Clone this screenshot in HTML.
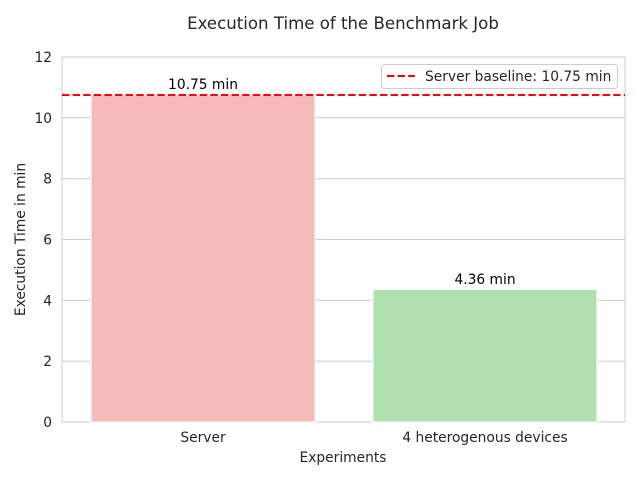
<!DOCTYPE html>
<html><head><style>html,body{margin:0;padding:0;background:#fff}</style></head><body>
<svg width="640" height="480" xmlns="http://www.w3.org/2000/svg" font-family="DejaVu Sans, sans-serif">
<rect width="640" height="480" fill="#fff"/>
<g stroke="#cccccc" stroke-width="1">
<line x1="62" x2="625" y1="422" y2="422"/>
<line x1="62" x2="625" y1="361.2" y2="361.2"/>
<line x1="62" x2="625" y1="300.3" y2="300.3"/>
<line x1="62" x2="625" y1="239.5" y2="239.5"/>
<line x1="62" x2="625" y1="178.7" y2="178.7"/>
<line x1="62" x2="625" y1="117.8" y2="117.8"/>
<line x1="62" x2="625" y1="57" y2="57"/>
<line x1="62" x2="62" y1="57" y2="422"/>
<line x1="625" x2="625" y1="57" y2="422"/>
</g>
<rect x="91" y="95" width="224" height="327" fill="#f5bbba" stroke="#fff" stroke-width="1"/>
<rect x="373" y="289.4" width="224" height="132.6" fill="#b0dfb0" stroke="#fff" stroke-width="1"/>
<line x1="62" x2="625" y1="95" y2="95" stroke="#ff0000" stroke-width="2" stroke-dasharray="7.4,3.2"/>
<g font-size="13.8" fill="#262626" text-anchor="end">
<text x="52" y="427">0</text><text x="52" y="366.2">2</text><text x="52" y="305.3">4</text>
<text x="52" y="244.5">6</text><text x="52" y="183.7">8</text><text x="52" y="122.8">10</text><text x="52" y="62">12</text>
</g>
<g font-size="13.8" fill="#262626" text-anchor="middle">
<text x="203" y="442">Server</text>
<text x="485" y="442">4 heterogenous devices</text>
<text x="343" y="462">Experiments</text>
<text x="203" y="89" fill="#000">10.75 min</text>
<text x="485" y="284" fill="#000">4.36 min</text>
<text x="343" y="29" font-size="16.6">Execution Time of the Benchmark Job</text>
<text transform="translate(25,239.5) rotate(-90)">Execution Time in min</text>
</g>
<rect x="381.5" y="64.5" width="236" height="24" rx="3" fill="#fff" fill-opacity="0.8" stroke="#cccccc"/>
<line x1="387" x2="415" y1="76" y2="76" stroke="#ff0000" stroke-width="2" stroke-dasharray="7.4,3.2"/>
<text x="425" y="81" font-size="13.8" fill="#262626">Server baseline: 10.75 min</text>
</svg>
</body></html>
